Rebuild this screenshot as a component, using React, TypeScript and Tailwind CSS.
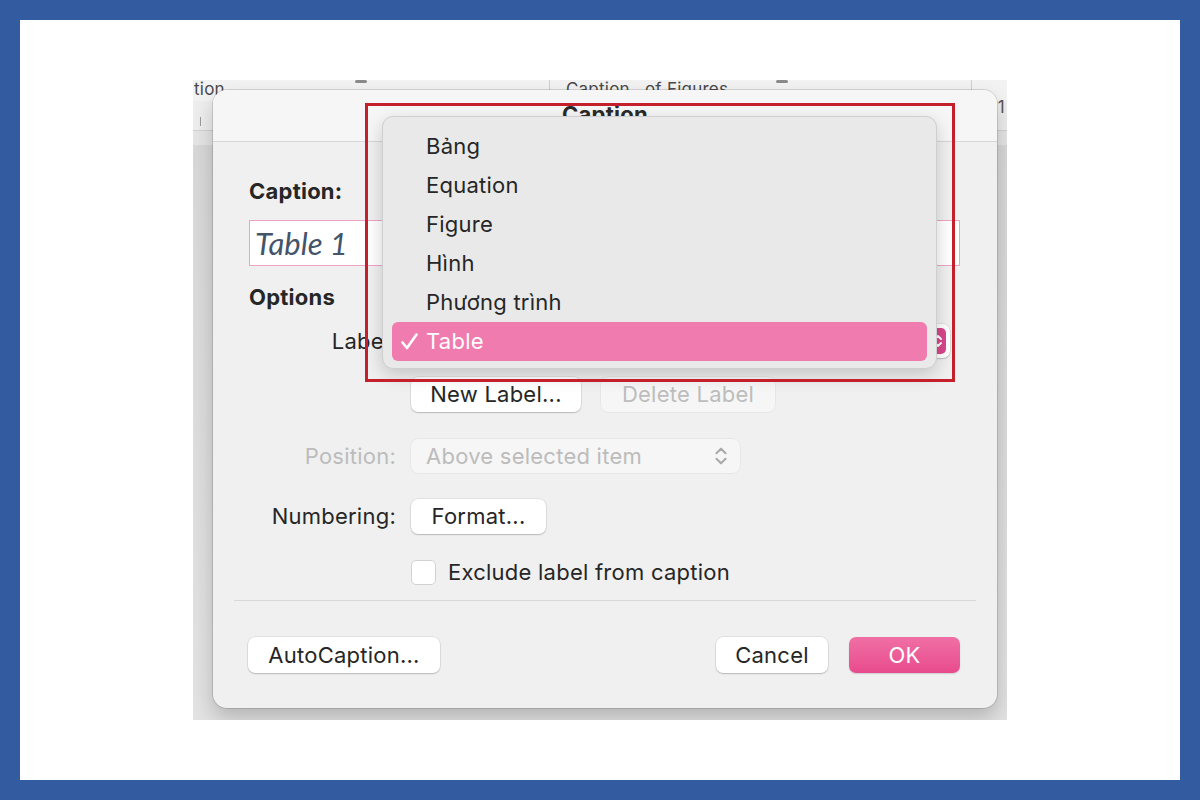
import { ChevronsUpDown } from "lucide-react";

const font = "font-['Inter','Noto_Sans',sans-serif] tracking-[0.015em]";

const menuItems = ["Bảng", "Equation", "Figure", "Hình", "Phương trình", "Table"];

const MacButton = ({
  children,
  className = "",
  disabled = false,
}: {
  children: React.ReactNode;
  className?: string;
  disabled?: boolean;
}) => (
  <div
    className={`h-[35px] flex items-center justify-center rounded-[7px] text-[22px] ${
      disabled
        ? "bg-[#f6f6f6] text-[#bdbdbd] shadow-[0_0_0_0.5px_rgba(0,0,0,0.07)]"
        : "bg-white text-[#262626] shadow-[0_0_0_0.5px_rgba(0,0,0,0.12),0_1px_1.5px_rgba(0,0,0,0.18)]"
    } ${className}`}
  >
    {children}
  </div>
);

const Stepper = () => (
  <div className="w-[16px] h-[26px] rounded-[5px] bg-[#d9478a] flex items-center justify-center">
    <svg width="10" height="16" viewBox="0 0 10 16" fill="none" stroke="white" strokeWidth="2" strokeLinecap="round" strokeLinejoin="round">
      <path d="M2 6 L5 3 L8 6" />
      <path d="M2 10 L5 13 L8 10" />
    </svg>
  </div>
);

const CheckMark = () => (
  <svg width="19" height="19" viewBox="0 0 19 19" fill="none" stroke="white" strokeWidth="2.6" strokeLinecap="round" strokeLinejoin="round">
    <path d="M2.5 10.5 L7 16 L16.5 2.5" />
  </svg>
);

const DropdownMenu = () => (
  <div className="absolute left-[169px] top-[26px] w-[555px] h-[253px] rounded-[11px] bg-[#e9e9e9] border border-[#cfcfcf] shadow-[0_6px_18px_rgba(0,0,0,0.18)] pt-[10px] px-[9px]">
    {menuItems.map((item) => {
      const selected = item === "Table";
      return (
        <div
          key={item}
          className={`h-[39px] flex items-center rounded-[6px] text-[22px] ${
            selected ? "bg-[#f07bae] text-white" : "text-[#262626]"
          }`}
        >
          <span className="w-[34px] pl-[8px] flex items-center">{selected ? <CheckMark /> : null}</span>
          <span>{item}</span>
        </div>
      );
    })}
  </div>
);

const CaptionDialog = () => (
  <div className="absolute left-[20px] top-[10px] w-[784px] h-[618px] rounded-[14px] bg-[#f0f0f0] shadow-[0_0_0_1px_rgba(0,0,0,0.12),0_10px_20px_rgba(0,0,0,0.2)]">
    <div className="h-[52px] rounded-t-[14px] bg-[#f6f6f6] border-b border-[#d6d6d6] flex justify-center pt-[8px]">
      <span className="text-[22px] font-bold text-[#2a2a2a]">Caption</span>
    </div>

    <div className="px-[36px]">
      <div className="mt-[35px] h-[28px] flex items-center text-[22px] font-bold text-[#262626]">Caption:</div>
      <div className="mt-[15px] h-[46px] w-[711px] bg-white border border-[#efa3c4] flex items-center px-[5px]">
        <span className="italic text-[31px] tracking-normal text-[#44546a] font-['Lato',sans-serif]">Table 1</span>
      </div>
      <div className="mt-[17px] h-[28px] flex items-center text-[22px] font-bold text-[#262626]">Options</div>

      <div className="mt-[13px] grid grid-cols-[147px_1fr] gap-x-[15px] items-center">
        <div className="h-[34px] flex items-center justify-end text-[22px] text-[#262626]">Label:</div>
        <div className="w-[539px] h-[34px] bg-white rounded-[7px] shadow-[0_0_0_0.5px_rgba(0,0,0,0.12),0_1px_1.5px_rgba(0,0,0,0.18)] flex items-center justify-end pr-[4px]">
          <Stepper />
        </div>

        <div className="mt-[19px]" />
        <div className="mt-[19px] flex gap-[20px]">
          <MacButton className="w-[170px]">New Label...</MacButton>
          <MacButton className="w-[174px]" disabled>
            Delete Label
          </MacButton>
        </div>

        <div className="mt-[27px] h-[34px] flex items-center justify-end text-[22px] text-[#bcbcbc]">Position:</div>
        <div className="mt-[27px] w-[329px] h-[34px] rounded-[7px] bg-[#f6f6f6] shadow-[0_0_0_0.5px_rgba(0,0,0,0.07)] flex items-center justify-between pl-[15px] pr-[8px] text-[22px] text-[#bcbcbc]">
          <span>Above selected item</span>
          <ChevronsUpDown size={22} strokeWidth={2.2} className="text-[#a9a9a9]" />
        </div>

        <div className="mt-[26px] h-[35px] flex items-center justify-end text-[22px] text-[#262626]">Numbering:</div>
        <div className="mt-[26px]">
          <MacButton className="w-[135px]">Format...</MacButton>
        </div>

        <div className="mt-[25px]" />
        <div className="mt-[25px] h-[26px] flex items-center gap-[12px]">
          <div className="w-[25px] h-[25px] rounded-[5px] bg-white border border-[#d2d2d2]" />
          <span className="text-[22px] text-[#262626]">Exclude label from caption</span>
        </div>
      </div>
    </div>

    <div className="mx-[21px] mt-[15px] h-px bg-[#d8d8d8]" />

    <div className="mt-[36px] pl-[35px] pr-[37px] flex items-center">
      <MacButton className="w-[192px] h-[36px]">AutoCaption...</MacButton>
      <div className="flex-1" />
      <MacButton className="w-[112px] h-[36px]">Cancel</MacButton>
      <div className="ml-[21px] w-[111px] h-[36px] rounded-[7px] bg-gradient-to-b from-[#f06fa5] to-[#e84a8d] text-white text-[22px] flex items-center justify-center shadow-[0_1px_1.5px_rgba(0,0,0,0.15)]">
        OK
      </div>
    </div>

    <DropdownMenu />
  </div>
);

const App = () => {
  return (
    <div className={`w-[1200px] h-[800px] bg-[#325c9f] p-5 ${font}`}>
      <div className="w-full h-full bg-white flex justify-center pt-[60px]">
        <div className="relative w-[814px] h-[640px] overflow-hidden bg-gradient-to-b from-[#d6d6d6] to-[#e2e2e2]">
          <div className="h-[21px] bg-[#f2f2f2] flex items-start text-[17px] leading-[19px] text-[#4a4a4a]">
            <span className="ml-[1px]">tion</span>
            <span className="ml-[130px] w-[12px] h-[3px] rounded-sm bg-[#8a8a8a]" />
            <span className="ml-[182px] w-px h-[21px] bg-[#cfcfcf]" />
            <span className="ml-[16px]">Caption&nbsp;&nbsp;&nbsp;of Figures</span>
            <span className="ml-[48px] w-[12px] h-[3px] rounded-sm bg-[#8a8a8a]" />
            <span className="ml-[183px] w-px h-[21px] bg-[#cfcfcf]" />
          </div>
          <div className="h-[30px] bg-[#ededed] border-b border-[#d2d2d2] flex items-end justify-between px-[7px] pb-[4px]">
            <span className="w-px h-[9px] bg-[#9a9a9a]" />
            <span className="text-[17px] text-[#555] leading-none mb-[10px] mr-[-5px]">1</span>
          </div>
          <div className="h-[14px] bg-[#e4e4e4]" />

          <CaptionDialog />

          <div className="absolute left-[172px] top-[23px] w-[590px] h-[279px] border-[3px] border-[#c4202b]" />
        </div>
      </div>
    </div>
  );
};

export default App;
